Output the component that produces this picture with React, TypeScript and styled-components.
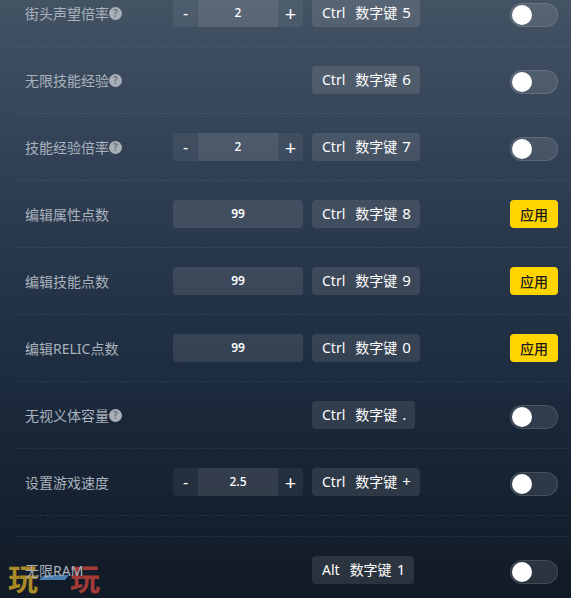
import React from "react";
import styled, { createGlobalStyle } from "styled-components";

const Global = createGlobalStyle`
  html, body { margin: 0; padding: 0; height: 100%; overflow: hidden; }
  body { font-family: "Noto Sans", "Noto Sans CJK SC", sans-serif; }
`;

const Page = styled.div`
  position: relative;
  width: 571px;
  height: 598px;
  overflow: hidden;
  background: linear-gradient(180deg, #435364 0%, #2f3e52 30%, #1c2a3d 65%, #111a26 100%);
`;

const List = styled.div`
  position: relative;
  z-index: 1;
  display: flex;
  flex-direction: column;
  margin: -20px 0 0 15px;
  width: 554px;
`;

const Row = styled.div`
  display: flex;
  align-items: center;
  height: 28px;
  padding: 19px 0 19px 10px;
  border-bottom: 1px dashed rgba(255, 255, 255, 0.08);
`;

const Spacer = styled.div`
  height: 20px;
  border-bottom: 1px dashed rgba(255, 255, 255, 0.08);
`;

const Label = styled.div`
  display: flex;
  align-items: center;
  width: 148px;
  flex: none;
  font-size: 14px;
  color: #a9b2bd;
`;

const Help = styled.span`
  display: inline-flex;
  align-items: center;
  justify-content: center;
  width: 13px;
  height: 13px;
  border-radius: 50%;
  background: #a9afb7;
  color: #6b7683;
  font-size: 10px;
  font-weight: 700;
  line-height: 1;
`;

const Control = styled.div`
  width: 130px;
  flex: none;
  margin-right: 9px;
`;

const Stepper = styled.div`
  display: flex;
  height: 28px;
  border-radius: 4px;
  overflow: hidden;
  background: rgba(255, 255, 255, 0.06);
  color: #fff;
`;

const StepButton = styled.div<{ $size: number }>`
  width: 25px;
  flex: none;
  display: flex;
  align-items: center;
  justify-content: center;
  font-size: ${(p) => p.$size}px;
  font-weight: 400;
`;

const StepValue = styled.div`
  flex: 1;
  display: flex;
  align-items: center;
  justify-content: center;
  padding-bottom: 2px;
  font-size: 12px;
  font-weight: 500;
  background: rgba(255, 255, 255, 0.07);
`;

const NumberValue = styled.div`
  height: 28px;
  box-sizing: border-box;
  padding-bottom: 1px;
  border-radius: 4px;
  display: flex;
  align-items: center;
  justify-content: center;
  font-size: 12px;
  font-weight: 600;
  color: #fff;
  background: rgba(255, 255, 255, 0.1);
`;

const Key = styled.div`
  height: 28px;
  box-sizing: border-box;
  padding: 0 9px 2px 10px;
  border-radius: 4px;
  display: flex;
  align-items: center;
  gap: 10px;
  font-size: 14px;
  color: #fff;
  white-space: nowrap;
  background: rgba(255, 255, 255, 0.1);
`;

const KeyChar = styled.span`
  font-size: 15px;
  margin-left: 5px;
`;

const End = styled.div`
  margin-left: auto;
  margin-right: 11px;
  display: flex;
  align-items: center;
`;

const Toggle = styled.div`
  width: 48px;
  height: 24px;
  margin-top: 4px;
  box-sizing: border-box;
  border-radius: 12px;
  border: 1px solid rgba(255, 255, 255, 0.12);
  background: rgba(255, 255, 255, 0.1);
  display: flex;
  align-items: center;
`;

const Knob = styled.div`
  width: 20px;
  height: 20px;
  margin-left: 1px;
  border-radius: 50%;
  background: #fff;
`;

const Apply = styled.div`
  width: 48px;
  height: 28px;
  border-radius: 4px;
  background: #ffd500;
  color: #1a1a1a;
  font-size: 14px;
  font-weight: 500;
  display: flex;
  align-items: center;
  justify-content: center;
`;

const Watermark = styled.div`
  position: absolute;
  left: 8px;
  top: 560px;
  width: 92px;
  height: 34px;
  display: flex;
  justify-content: space-between;
  font-family: "Noto Sans CJK SC", sans-serif;
  font-size: 30px;
  font-weight: 700;
  line-height: 34px;
  pointer-events: none;
`;

const MarkGlyph = styled.span<{ $color: string }>`
  color: ${(p) => p.$color};
`;

const MarkBar = styled.svg`
  position: absolute;
  left: 31px;
  top: 15px;
`;

type Item = {
  label: string;
  help?: boolean;
  step?: string;
  num?: string;
  mod?: string;
  key_: string;
  apply?: boolean;
};

const items: Item[] = [
  { label: "街头声望倍率", help: true, step: "2", key_: "5" },
  { label: "无限技能经验", help: true, key_: "6" },
  { label: "技能经验倍率", help: true, step: "2", key_: "7" },
  { label: "编辑属性点数", num: "99", key_: "8", apply: true },
  { label: "编辑技能点数", num: "99", key_: "9", apply: true },
  { label: "编辑RELIC点数", num: "99", key_: "0", apply: true },
  { label: "无视义体容量", help: true, key_: "." },
  { label: "设置游戏速度", step: "2.5", key_: "+" },
];

function OptionRow({ item }: { item: Item }) {
  return (
    <Row>
      <Label>
        {item.label}
        {item.help && <Help>?</Help>}
      </Label>
      <Control>
        {item.step && (
          <Stepper>
            <StepButton $size={16}>-</StepButton>
            <StepValue>{item.step}</StepValue>
            <StepButton $size={20}>+</StepButton>
          </Stepper>
        )}
        {item.num && <NumberValue>{item.num}</NumberValue>}
      </Control>
      <Key>
        <span>{item.mod ?? "Ctrl"}</span>
        <span>
          数字键<KeyChar>{item.key_}</KeyChar>
        </span>
      </Key>
      <End>
        {item.apply ? (
          <Apply>应用</Apply>
        ) : (
          <Toggle>
            <Knob />
          </Toggle>
        )}
      </End>
    </Row>
  );
}

export default function App() {
  return (
    <Page>
      <Global />
      <List>
        {items.map((it) => (
          <OptionRow key={it.label} item={it} />
        ))}
        <Spacer />
        <OptionRow item={{ label: "无限RAM", mod: "Alt", key_: "1" }} />
      </List>
      <Watermark>
        <MarkGlyph $color="#a98a25">玩</MarkGlyph>
        <MarkGlyph $color="#a33a38">玩</MarkGlyph>
        <MarkBar width="30" height="5" viewBox="0 0 30 5">
          <polygon points="5,0 30,0 26,5 0,5" fill="#4a7fb0" />
        </MarkBar>
      </Watermark>
    </Page>
  );
}
